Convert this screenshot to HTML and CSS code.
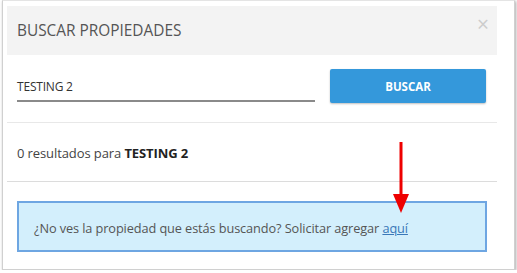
FILE: index.html
```html
<!DOCTYPE html>
<html>
<head>
<meta charset="utf-8">
<link rel="stylesheet" href="styles.css">
</head>
<body>
<div class="frame">
  <div class="modal">
    <div class="header">
      <span class="title">BUSCAR PROPIEDADES</span>
      <span class="close">&times;</span>
    </div>
    <div class="search-row">
      <div class="input">TESTING 2</div>
      <button class="btn">BUSCAR</button>
    </div>
    <div class="results">0 resultados para <b>TESTING 2</b></div>
    <div class="info-wrap">
      <div class="info">¿No ves la propiedad que estás buscando? Solicitar agregar <a href="#">aquí</a></div>
    </div>
  </div>
  <svg class="arrow" width="20" height="72" viewBox="0 0 20 72">
    <line x1="10" y1="0" x2="10" y2="56" stroke="#ee0000" stroke-width="3"/>
    <polygon points="2,52 18,52 10,71" fill="#ee0000"/>
  </svg>
</div>
</body>
</html>
```

FILE: styles.css
```css
html, body {
  margin: 0;
  padding: 0;
  background: #ffffff;
}
body {
  font-family: "Open Sans", "Noto Sans", sans-serif;
  color: #444;
}
.frame {
  position: relative;
  box-sizing: border-box;
  margin-left: 2px;
  width: 513px;
  height: 270px;
  border: 1px solid #d0d0d0;
  border-top-color: #e4e4e4;
  box-shadow: 1px 1px 3px rgba(0,0,0,0.35);
  padding: 5px 0 0 4px;
  background: #fff;
}
.modal {
  width: 490px;
}
.header {
  height: 49px;
  background: #f3f3f3;
  display: flex;
  align-items: center;
  justify-content: space-between;
  padding: 0 10px 0 10px;
}
.title {
  font-size: 15.4px;
  color: #555;
  margin-top: 0;
}
.close {
  font-size: 21px;
  color: #cccccc;
  align-self: flex-start;
  margin-top: 8px;
  line-height: 21px;
  margin-right: -2px;
}
.search-row {
  display: flex;
  align-items: flex-start;
  padding: 14px 11px 19px 10px;
  border-bottom: 1px solid #e8e8e8;
}
.input {
  width: 298px;
  height: 33px;
  box-sizing: border-box;
  border-bottom: 2px solid #8a8a8a;
  font-size: 12px;
  color: #333;
  padding-top: 9px;
  letter-spacing: -0.2px;
}
.btn {
  margin-left: 15px;
  width: 156px;
  height: 34px;
  border: none;
  border-radius: 2px;
  background: #3498db;
  color: #fff;
  font-family: "Open Sans", sans-serif;
  font-weight: bold;
  font-size: 11.5px;
  box-shadow: 0 1px 2px rgba(0,0,0,0.25);
  padding: 0;
}
.results {
  height: 59px;
  box-sizing: border-box;
  padding: 21px 10px 0;
  font-size: 13px;
  color: #444;
  border-bottom: 1px solid #dcdcdc;
  letter-spacing: -0.1px;
}
.results b {
  color: #222;
}
.info-wrap {
  padding: 19px 10px 0 10px;
}
.info {
  box-sizing: border-box;
  height: 51px;
  border: 2px solid #6ea6e2;
  background: #d3effc;
  font-size: 12.75px;
  color: #555;
  padding: 16px 0 0 15px;
  letter-spacing: -0.1px;
}
.info a {
  color: #3a78b8;
}
.arrow {
  position: absolute;
  left: 388px;
  top: 141px;
}
```
